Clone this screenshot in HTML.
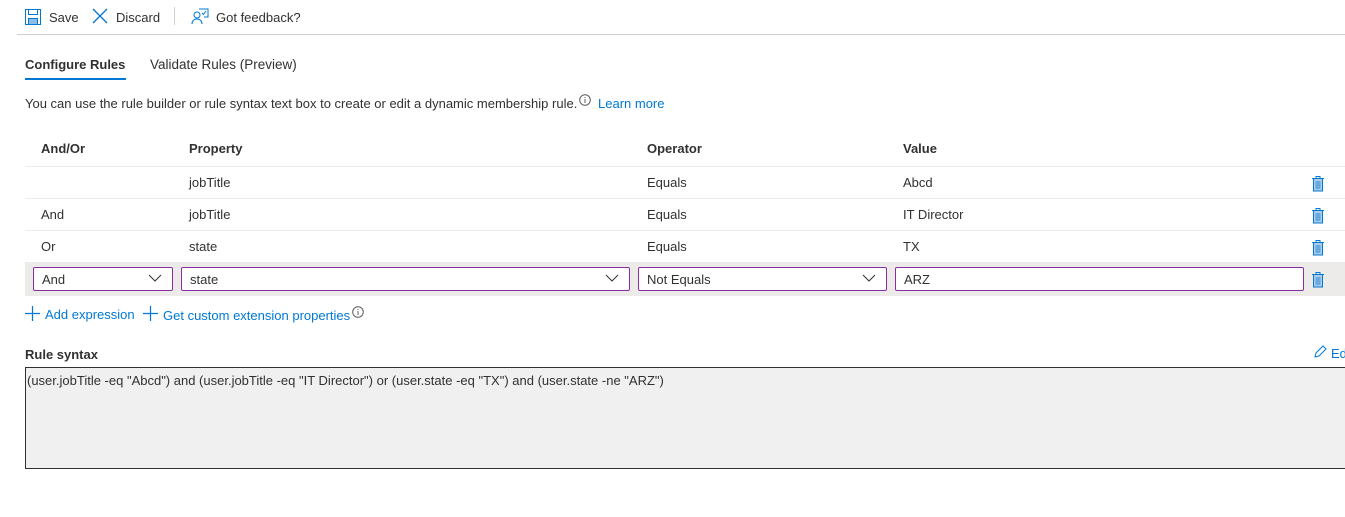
<!DOCTYPE html>
<html><head><style>
*{margin:0;padding:0;box-sizing:border-box}
body{width:1345px;height:517px;background:#fff;font-family:"Liberation Sans",Arial,sans-serif;font-size:13px;color:#323130;position:relative;overflow:hidden}
.a{position:absolute;white-space:nowrap}
.line{position:absolute;height:1px;background:#edebe9}
.inp{position:absolute;top:267px;height:24px;border:1px solid #8a2da5;border-radius:2px;background:#fff;padding:4px 8px}
.chev{position:absolute;right:10px;top:6px}
.trash{position:absolute;left:1311px}
.blue{color:#0078d4}
</style></head><body>
<svg class="a" style="left:25px;top:9px" width="16" height="16" viewBox="0 0 16 16"><rect x="0.5" y="0.5" width="15" height="15" fill="none" stroke="#0078d4"/><rect x="3.5" y="0.5" width="9" height="5" fill="none" stroke="#0078d4"/><rect x="3.5" y="9.5" width="9" height="6" fill="#8cbde6" stroke="#0078d4"/></svg>
<div class="a" style="left:49px;top:10px">Save</div>
<svg class="a" style="left:92px;top:8px" width="16" height="16" viewBox="0 0 16 16"><path d="M1 1L15 15M15 1L1 15" stroke="#0078d4" stroke-width="1.3"/></svg>
<div class="a" style="left:116px;top:10px">Discard</div>
<div class="a" style="left:174px;top:7px;width:1px;height:18px;background:#d2d0ce"></div>
<svg class="a" style="left:191px;top:8px" width="18" height="17" viewBox="0 0 18 17"><circle cx="6" cy="7" r="3" fill="none" stroke="#0078d4"/><path d="M1 16c0-3 2-5 5-5s5 2 5 5M8 1h9v8h-4" fill="none" stroke="#0078d4"/><path d="M11 5l1.5 1.5L15 3" fill="none" stroke="#0078d4"/></svg>
<div class="a" style="left:216px;top:10px">Got feedback?</div>
<div class="line" style="left:17px;top:34px;width:1328px;background:#d2d0ce"></div>
<div class="a" style="left:25px;top:57px;font-size:13px;font-weight:bold;color:#323130">Configure Rules</div>
<div class="a" style="left:25px;top:78px;width:101px;height:2px;background:#0078d4"></div>
<div class="a" style="left:150px;top:57px;font-size:13.5px">Validate Rules (Preview)</div>
<div class="a" style="left:25px;top:96px">You can use the rule builder or rule syntax text box to create or edit a dynamic membership rule.</div>
<svg class="a" style="left:579px;top:94px" width="12" height="12" viewBox="0 0 12 12"><circle cx="6" cy="6" r="5.3" fill="none" stroke="#605e5c"/><path d="M6 5v4M6 3v1" stroke="#605e5c"/></svg>
<div class="a blue" style="left:598px;top:96px">Learn more</div>
<div class="a" style="left:41px;top:141px;font-weight:bold">And/Or</div>
<div class="a" style="left:189px;top:141px;font-weight:bold">Property</div>
<div class="a" style="left:647px;top:141px;font-weight:bold">Operator</div>
<div class="a" style="left:903px;top:141px;font-weight:bold">Value</div>
<div class="line" style="left:25px;top:166px;width:1320px"></div>
<div class="a" style="left:189px;top:175px">jobTitle</div><div class="a" style="left:647px;top:175px">Equals</div><div class="a" style="left:903px;top:175px">Abcd</div>
<div class="line" style="left:25px;top:198px;width:1320px"></div>
<div class="a" style="left:41px;top:207px">And</div><div class="a" style="left:189px;top:207px">jobTitle</div><div class="a" style="left:647px;top:207px">Equals</div><div class="a" style="left:903px;top:207px">IT Director</div>
<div class="line" style="left:25px;top:230px;width:1320px"></div>
<div class="a" style="left:41px;top:239px">Or</div><div class="a" style="left:189px;top:239px">state</div><div class="a" style="left:647px;top:239px">Equals</div><div class="a" style="left:903px;top:239px">TX</div>
<div class="a" style="left:25px;top:262px;width:1320px;height:34px;background:#edebe9"></div>
<div class="inp" style="left:33px;width:140px">And<svg class="chev" width="14" height="8" viewBox="0 0 14 8"><path d="M1 1l6 6 6-6" fill="none" stroke="#323130"/></svg></div>
<div class="inp" style="left:181px;width:449px">state<svg class="chev" width="14" height="8" viewBox="0 0 14 8"><path d="M1 1l6 6 6-6" fill="none" stroke="#323130"/></svg></div>
<div class="inp" style="left:638px;width:249px">Not Equals<svg class="chev" width="14" height="8" viewBox="0 0 14 8"><path d="M1 1l6 6 6-6" fill="none" stroke="#323130"/></svg></div>
<div class="inp" style="left:895px;width:409px">ARZ</div>
<svg class="trash" style="top:175px" width="14" height="17" viewBox="0 0 14 17"><path d="M1 3.5h12M5 3.5V1.5h4v2" fill="none" stroke="#0078d4"/><rect x="2.5" y="3.5" width="9" height="12.5" fill="#a9cdee" stroke="#0078d4"/><rect x="4.5" y="6" width="5" height="8" fill="#6aa9e0"/></svg>
<svg class="trash" style="top:207px" width="14" height="17" viewBox="0 0 14 17"><path d="M1 3.5h12M5 3.5V1.5h4v2" fill="none" stroke="#0078d4"/><rect x="2.5" y="3.5" width="9" height="12.5" fill="#a9cdee" stroke="#0078d4"/><rect x="4.5" y="6" width="5" height="8" fill="#6aa9e0"/></svg>
<svg class="trash" style="top:239px" width="14" height="17" viewBox="0 0 14 17"><path d="M1 3.5h12M5 3.5V1.5h4v2" fill="none" stroke="#0078d4"/><rect x="2.5" y="3.5" width="9" height="12.5" fill="#a9cdee" stroke="#0078d4"/><rect x="4.5" y="6" width="5" height="8" fill="#6aa9e0"/></svg>
<svg class="trash" style="top:271px" width="14" height="17" viewBox="0 0 14 17"><path d="M1 3.5h12M5 3.5V1.5h4v2" fill="none" stroke="#0078d4"/><rect x="2.5" y="3.5" width="9" height="12.5" fill="#a9cdee" stroke="#0078d4"/><rect x="4.5" y="6" width="5" height="8" fill="#6aa9e0"/></svg>
<svg class="a" style="left:25px;top:306px" width="15" height="15" viewBox="0 0 15 15"><path d="M7.5 0v15M0 7.5h15" stroke="#0078d4" stroke-width="1.2"/></svg>
<div class="a blue" style="left:45px;top:307px">Add expression</div>
<svg class="a" style="left:143px;top:306px" width="15" height="15" viewBox="0 0 15 15"><path d="M7.5 0v15M0 7.5h15" stroke="#0078d4" stroke-width="1.2"/></svg>
<div class="a blue" style="left:163px;top:308px">Get custom extension properties</div>
<svg class="a" style="left:352px;top:306px" width="12" height="12" viewBox="0 0 12 12"><circle cx="6" cy="6" r="5.3" fill="none" stroke="#605e5c"/><path d="M6 5v4M6 3v1" stroke="#605e5c"/></svg>
<div class="a" style="left:25px;top:347px;font-weight:bold">Rule syntax</div>
<svg class="a" style="left:1314px;top:345px" width="13" height="13" viewBox="0 0 13 13"><path d="M1 12l1-4 7-7 3 3-7 7z" fill="none" stroke="#0078d4"/></svg>
<div class="a blue" style="left:1331px;top:346px">Ed</div>
<div class="a" style="left:25px;top:367px;width:1330px;height:102px;background:#f0f0f0;border:1px solid #323130;padding:5px 0 0 1px">(user.jobTitle -eq "Abcd") and (user.jobTitle -eq "IT Director") or (user.state -eq "TX") and (user.state -ne "ARZ")</div>
</body></html>
